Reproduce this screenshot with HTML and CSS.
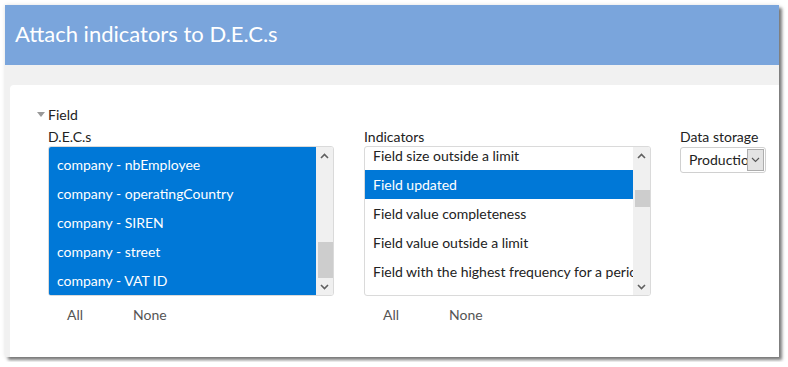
FILE: index.html
```html
<!DOCTYPE html>
<html lang="en">
<head>
  <meta charset="UTF-8">
  <title>Attach indicators to D.E.C.s</title>
  <link rel="stylesheet" href="styles.css">
</head>
<body>
  <div class="dialog">
    <div class="dialog-header">
      <h1>Attach indicators to D.E.C.s</h1>
    </div>

    <div class="dialog-body">
      <div class="card">
        <div class="section-title"><span class="caret"></span>Field</div>

        <div class="fields">
          <!-- D.E.C.s -->
          <div class="col col-decs">
            <div class="field-label">D.E.C.s</div>
            <div class="listbox">
              <div class="options options-decs">
                <div class="option selected">company - nbEmployee</div>
                <div class="option selected">company - operatingCountry</div>
                <div class="option selected">company - SIREN</div>
                <div class="option selected">company - street</div>
                <div class="option selected">company - VAT ID</div>
              </div>
              <div class="scrollbar">
                <span class="arrow"><svg width="9" height="6" viewBox="0 0 9 6"><polyline points="1,5 4.5,1.5 8,5" /></svg></span>
                <span class="thumb thumb-decs"></span>
                <span class="arrow arrow-down"><svg width="9" height="6" viewBox="0 0 9 6"><polyline points="1,1 4.5,4.5 8,1" /></svg></span>
              </div>
            </div>
            <div class="list-actions">
              <span class="action-all">All</span>
              <span class="action-none">None</span>
            </div>
          </div>

          <!-- Indicators -->
          <div class="col col-indicators">
            <div class="field-label">Indicators</div>
            <div class="listbox">
              <div class="options options-indicators">
                <div class="option">Field size outside a limit</div>
                <div class="option selected">Field updated</div>
                <div class="option">Field value completeness</div>
                <div class="option">Field value outside a limit</div>
                <div class="option">Field with the highest frequency for a period</div>
              </div>
              <div class="scrollbar">
                <span class="arrow"><svg width="9" height="6" viewBox="0 0 9 6"><polyline points="1,5 4.5,1.5 8,5" /></svg></span>
                <span class="thumb thumb-indicators"></span>
                <span class="arrow arrow-down"><svg width="9" height="6" viewBox="0 0 9 6"><polyline points="1,1 4.5,4.5 8,1" /></svg></span>
              </div>
            </div>
            <div class="list-actions">
              <span class="action-all">All</span>
              <span class="action-none">None</span>
            </div>
          </div>

          <!-- Data storage -->
          <div class="col col-storage">
            <div class="field-label">Data storage</div>
            <div class="select">
              <span class="select-value">Production</span>
              <span class="select-btn"><svg width="9" height="6" viewBox="0 0 9 6"><polyline points="1,1 4.5,4.5 8,1" /></svg></span>
            </div>
          </div>
        </div>
      </div>
    </div>
  </div>
</body>
</html>
```

FILE: styles.css
```css
body {
  margin: 0;
  background: #fff;
  font-family: Lato, "Open Sans", sans-serif;
  font-size: 14px;
  color: #222;
}

.dialog {
  margin: 5px;
  width: 774px;
  height: 352px;
  display: flex;
  flex-direction: column;
  background: #f1f1f1;
  box-shadow: 3px 3px 3px rgba(0,0,0,0.5), 0 0 4px rgba(0,0,0,0.12);
}

.dialog-header {
  height: 60px;
  flex: none;
  background: #7aa5dc;
  padding-left: 10px;
}
.dialog-header h1 {
  margin: 0;
  font-size: 22px;
  font-weight: normal;
  line-height: 57px;
  color: #fff;
}

.dialog-body {
  flex: 1;
  display: flex;
  padding: 20px 0 0 5px;
}

.card {
  flex: 1;
  background: #fff;
  border-top-left-radius: 4px;
  padding: 21px 0 0 38px;
}

.section-title {
  margin-left: -11px;
  line-height: 17px;
  display: flex;
  align-items: center;
}
.caret {
  width: 0;
  height: 0;
  border-left: 4px solid transparent;
  border-right: 4px solid transparent;
  border-top: 5px solid #999;
  margin-right: 3px;
}

.fields {
  margin-top: 5px;
  display: flex;
}
.col-decs { width: 286px; margin-right: 30px; }
.col-indicators { width: 287px; margin-right: 29px; }

.field-label {
  line-height: 17px;
}

.listbox {
  margin-top: 1px;
  height: 148px;
  border: 1px solid #dadada;
  border-radius: 3px;
  display: flex;
  overflow: hidden;
}
.options {
  flex: 1;
  overflow: hidden;
}
.options-decs {
  background: #0078d7;
  padding-top: 3px;
}
.options-indicators .option:first-child { margin-top: -6px; }

.option {
  height: 29px;
  line-height: 29px;
  padding-left: 8px;
  white-space: nowrap;
  overflow: hidden;
}
.option.selected {
  background: #0078d7;
  color: #fff;
}

.scrollbar {
  width: 17px;
  flex: none;
  background: #f0f0f0;
  display: flex;
  flex-direction: column;
  align-items: center;
}
.arrow {
  height: 17px;
  display: flex;
  align-items: center;
  justify-content: center;
}
.arrow-down { margin-top: auto; }
.arrow svg polyline,
.select-btn svg polyline {
  fill: none;
  stroke: #606060;
  stroke-width: 1.6;
}
.thumb {
  width: 15px;
  margin-left: 1px;
  background: #cdcdcd;
}
.thumb-decs { margin-top: 78px; height: 36px; }
.thumb-indicators { margin-top: 26px; height: 17px; }

.list-actions {
  margin-top: 10px;
  line-height: 17px;
  color: #555;
  display: flex;
}
.action-all { margin-left: 19px; }
.action-none { margin-left: 50px; }

.select {
  margin-top: 2px;
  width: 84px;
  height: 24px;
  border: 1px solid #d0d0d0;
  border-radius: 3px;
  display: flex;
  align-items: center;
}
.select-value {
  flex: 1;
  overflow: hidden;
  white-space: nowrap;
  padding-left: 8px;
  line-height: 24px;
}
.select-btn {
  width: 15px;
  height: 20px;
  margin-right: 1px;
  background: #e3e3e3;
  border: 1px solid #adadad;
  display: flex;
  align-items: center;
  justify-content: center;
}
.select-btn svg polyline { stroke: #555; stroke-width: 1.1; }
```
